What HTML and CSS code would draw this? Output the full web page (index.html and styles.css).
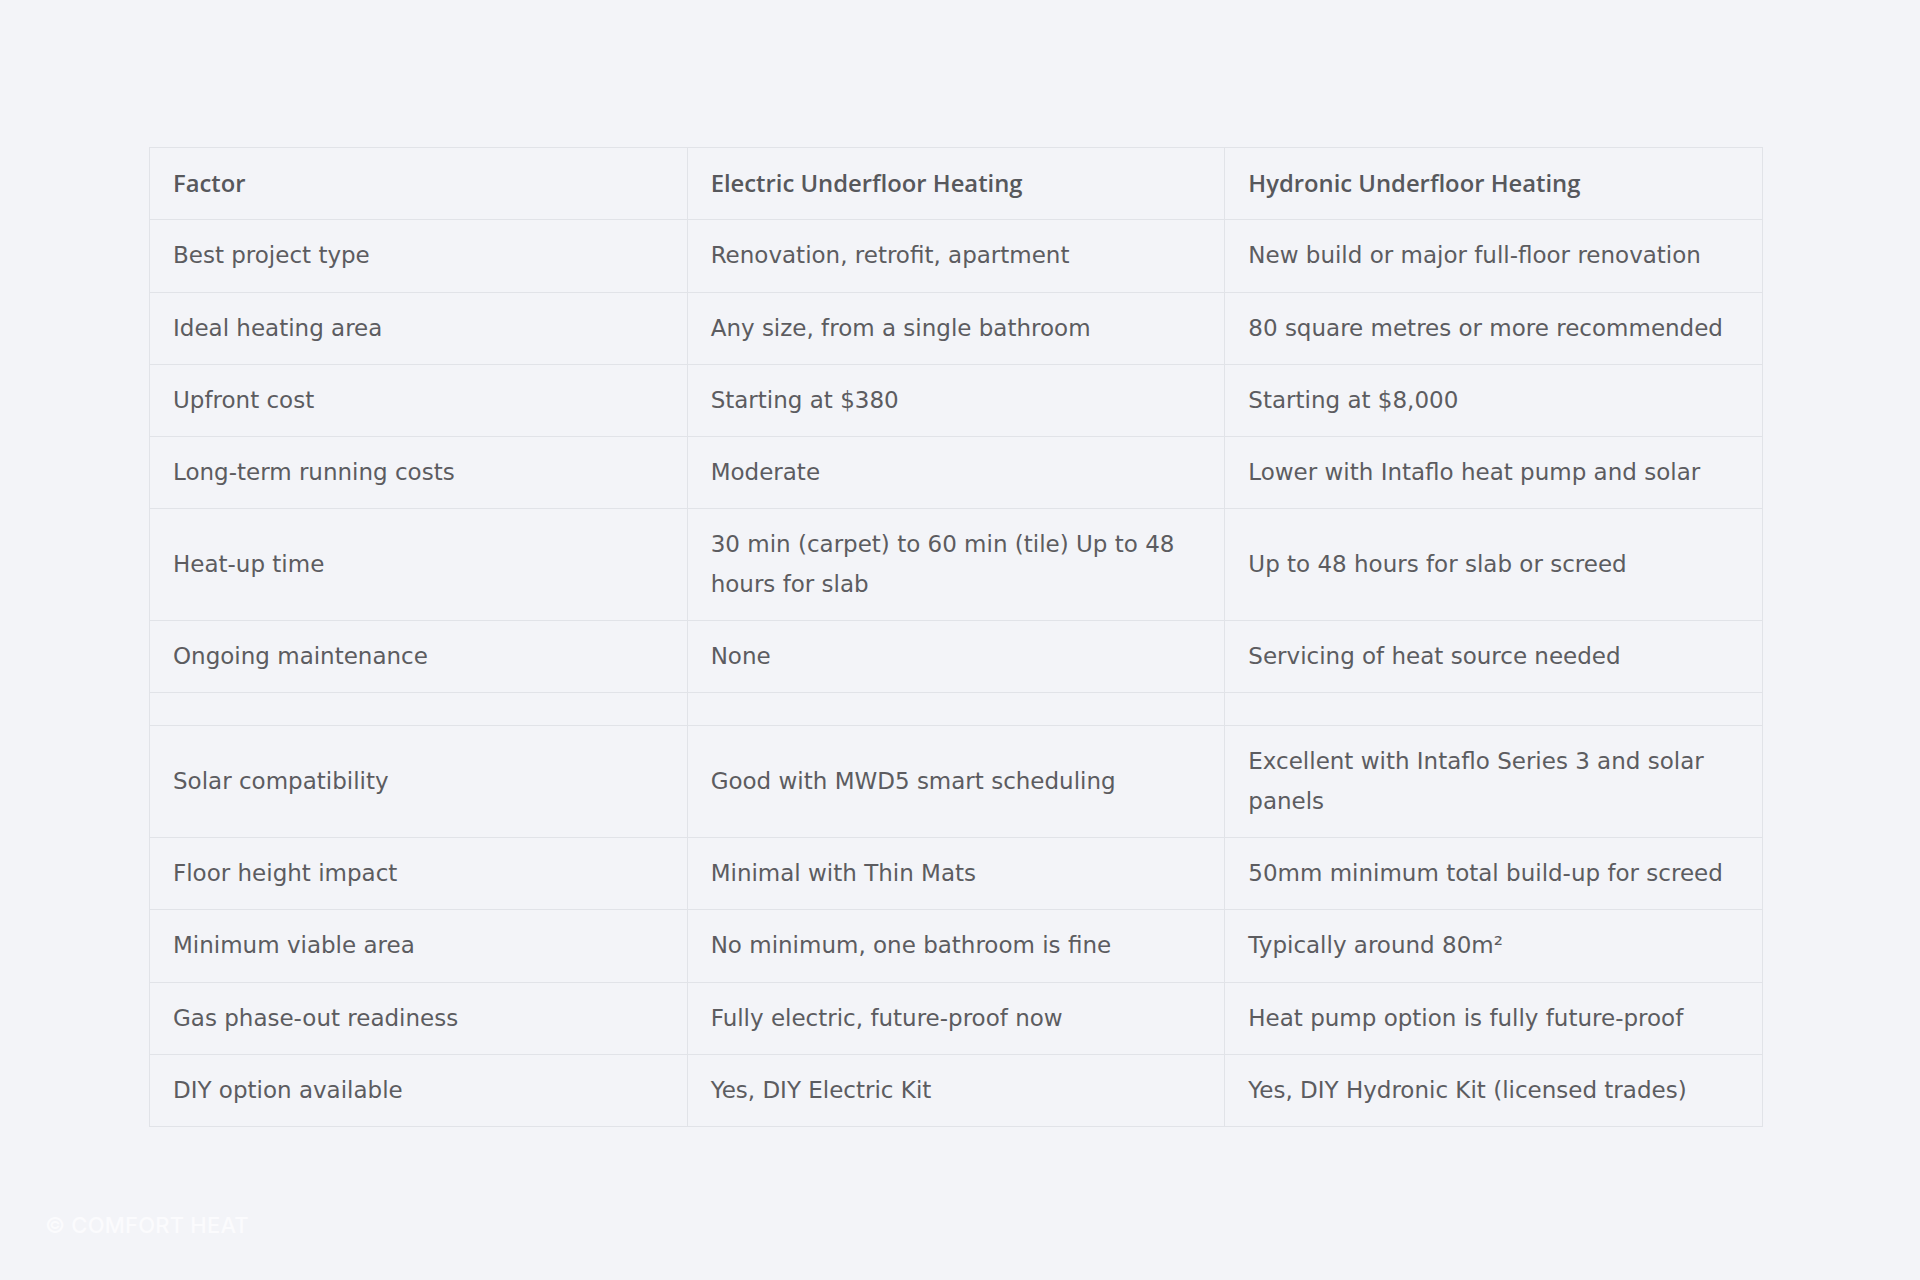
FILE: index.html
```html
<!DOCTYPE html>
<html lang="en">
<head>
    <meta charset="UTF-8">
    <meta name="viewport" content="width=device-width, initial-scale=1.0">
    <title>Electric vs Hydronic Underfloor Heating</title>
    <link rel="stylesheet" href="styles.css">
</head>
<body>
    <div class="page">
        <table class="compare">
            <thead>
                <tr>
                    <th>Factor</th>
                    <th>Electric Underfloor Heating</th>
                    <th>Hydronic Underfloor Heating</th>
                </tr>
            </thead>
            <tbody>
                <tr>
                    <td>Best project type</td>
                    <td>Renovation, retrofit, apartment</td>
                    <td>New build or major full-floor renovation</td>
                </tr>
                <tr>
                    <td>Ideal heating area</td>
                    <td>Any size, from a single bathroom</td>
                    <td>80 square metres or more recommended</td>
                </tr>
                <tr>
                    <td>Upfront cost</td>
                    <td>Starting at $380</td>
                    <td>Starting at $8,000</td>
                </tr>
                <tr>
                    <td>Long-term running costs</td>
                    <td>Moderate</td>
                    <td>Lower with Intaflo heat pump and solar</td>
                </tr>
                <tr>
                    <td>Heat-up time</td>
                    <td>30 min (carpet) to 60 min (tile) Up to 48 hours for slab</td>
                    <td>Up to 48 hours for slab or screed</td>
                </tr>
                <tr>
                    <td>Ongoing maintenance</td>
                    <td>None</td>
                    <td>Servicing of heat source needed</td>
                </tr>
                <tr class="spacer">
                    <td></td>
                    <td></td>
                    <td></td>
                </tr>
                <tr>
                    <td>Solar compatibility</td>
                    <td>Good with MWD5 smart scheduling</td>
                    <td>Excellent with Intaflo Series 3 and solar panels</td>
                </tr>
                <tr>
                    <td>Floor height impact</td>
                    <td>Minimal with Thin Mats</td>
                    <td>50mm minimum total build-up for screed</td>
                </tr>
                <tr>
                    <td>Minimum viable area</td>
                    <td>No minimum, one bathroom is fine</td>
                    <td>Typically around 80m²</td>
                </tr>
                <tr>
                    <td>Gas phase-out readiness</td>
                    <td>Fully electric, future-proof now</td>
                    <td>Heat pump option is fully future-proof</td>
                </tr>
                <tr>
                    <td>DIY option available</td>
                    <td>Yes, DIY Electric Kit</td>
                    <td>Yes, DIY Hydronic Kit (licensed trades)</td>
                </tr>
            </tbody>
        </table>
    </div>
    <div class="watermark">© Comfort Heat</div>
</body>
</html>
```

FILE: styles.css
```css
body {
    margin: 0;
    background: #f3f4f8;
    font-family: "DejaVu Sans", Arial, sans-serif;
    color: #5c5c60;
    height: 1280px;
    position: relative;
}

.page {
    padding: 147px 157px 0 149px;
}

.compare {
    width: 100%;
    border-collapse: collapse;
    table-layout: fixed;
    border: 1px solid #e1e3e8;
}

.compare th,
.compare td {
    border: 1px solid #e1e3e8;
    padding: 16px 23px;
    font-size: 23px;
    line-height: 39.3px;
    text-align: left;
    vertical-align: middle;
}

.compare th {
    font-family: "Open Sans", Arial, sans-serif;
    font-size: 23.8px;
    font-weight: 600;
    color: #57585c;
}

.compare td {
    font-weight: 400;
}

.spacer td {
    padding: 16px 23px;
    line-height: 0;
}

.watermark {
    position: absolute;
    left: 45px;
    top: 1212px;
    font-family: Inter, sans-serif;
    font-weight: 500;
    font-size: 22px;
    letter-spacing: 0.2px;
    text-transform: uppercase;
    color: #fbfbfd;
}
```
